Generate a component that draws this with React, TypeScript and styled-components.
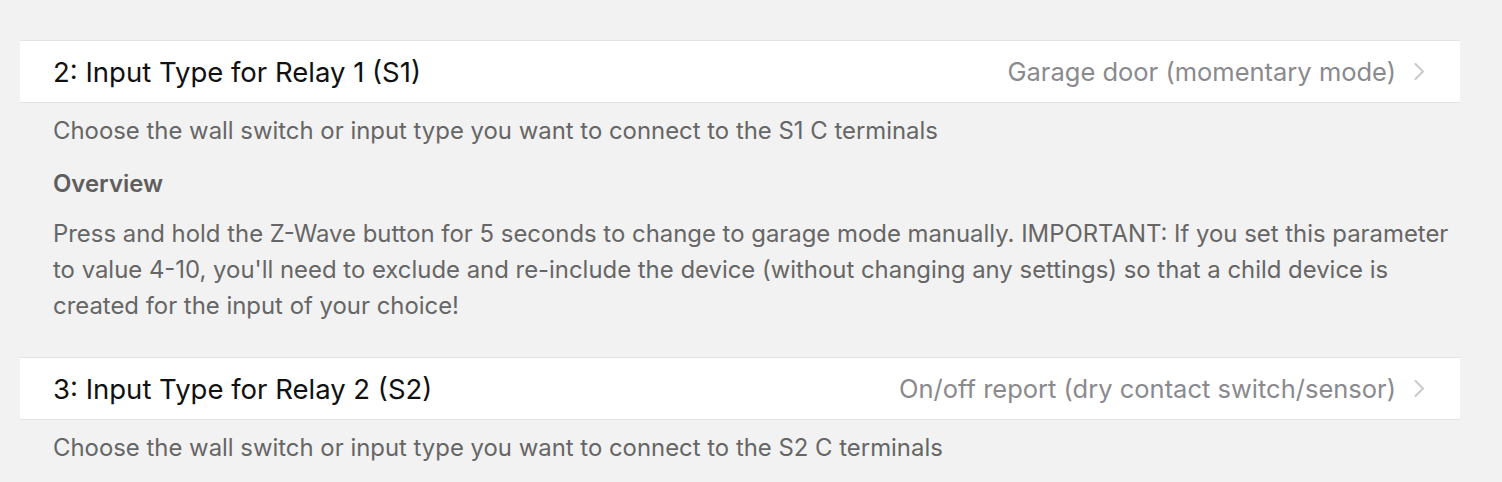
import React from "react";
import styled, { createGlobalStyle } from "styled-components";

const Global = createGlobalStyle`
  html, body { margin: 0; padding: 0; background: #f2f2f2; }
  body { font-family: Inter, "Noto Sans", "Liberation Sans", sans-serif; -webkit-font-smoothing: antialiased; }
`;

const Page = styled.div`
  padding: 40px 42px 0 20px;
  display: flex;
  flex-direction: column;
`;

const Row = styled.div`
  height: 61px;
  background: #ffffff;
  border-top: 1px solid #e2e2e2;
  border-bottom: 1px solid #e2e2e2;
  display: flex;
  align-items: center;
  justify-content: space-between;
  padding: 0 35px 0 33px;
`;

const Title = styled.div`
  font-size: 27.5px;
  color: #111;
`;

const Value = styled.div`
  display: flex;
  align-items: center;
  gap: 17px;
  font-size: 25.5px;
  color: #8a8a8e;
`;

const Details = styled.div`
  padding: 10px 8px 33px 33px;
  color: #666666;
  font-size: 23.9px;
  line-height: 36px;
  &:last-child { padding-bottom: 0; }
`;

const Desc = styled.p`
  margin: 0;
`;

const Heading = styled.h4`
  margin: 17px 0 0;
  font-size: 23.9px;
  font-weight: 600;
  color: #5e5e5e;
`;

const Para = styled.p`
  margin: 14px 0 0;
`;

const Chevron = () => (
  <svg width="12" height="19" viewBox="0 0 12 19" fill="none">
    <path d="M2.5 2l7.5 7.5L2.5 17" stroke="#c9c9cd" strokeWidth="2" strokeLinecap="round" strokeLinejoin="round" />
  </svg>
);

type ParamProps = { title: string; value: string; children: React.ReactNode };

const Param = ({ title, value, children }: ParamProps) => (
  <>
    <Row>
      <Title>{title}</Title>
      <Value>
        {value}
        <Chevron />
      </Value>
    </Row>
    <Details>{children}</Details>
  </>
);

export default function App() {
  return (
    <>
      <Global />
      <Page>
        <Param title="2: Input Type for Relay 1 (S1)" value="Garage door (momentary mode)">
          <Desc>Choose the wall switch or input type you want to connect to the S1 C terminals</Desc>
          <Heading>Overview</Heading>
          <Para>
            Press and hold the Z-Wave button for 5 seconds to change to garage mode manually. IMPORTANT: If you set this parameter to value 4-10, you'll need to exclude and re-include the device (without changing any settings) so that a child device is created for the input of your choice!
          </Para>
        </Param>
        <Param title="3: Input Type for Relay 2 (S2)" value="On/off report (dry contact switch/sensor)">
          <Desc>Choose the wall switch or input type you want to connect to the S2 C terminals</Desc>
        </Param>
      </Page>
    </>
  );
}
